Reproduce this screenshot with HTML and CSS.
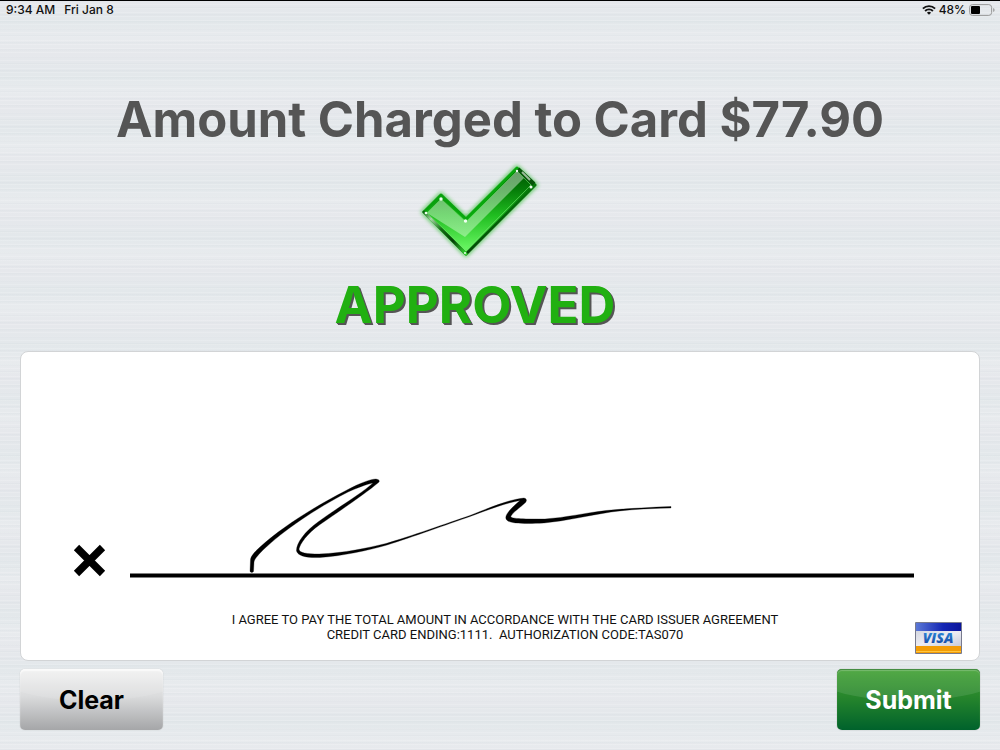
FILE: index.html
```html
<!DOCTYPE html>
<html lang="en">
<head>
<meta charset="utf-8">
<meta name="viewport" content="width=device-width, initial-scale=1">
<title>Card payment signature</title>
<link rel="stylesheet" href="styles.css">
</head>
<body>
<header class="status">
  <div class="status-group"><span>9:34 AM</span><span>Fri Jan 8</span></div>
  <div class="status-right">
    <svg class="wifi" viewBox="0 0 14 10" aria-hidden="true"><g fill="none" stroke="#111" stroke-width="1.9"><path d="M.9 3.700a8.600 8.600 0 0 1 12.200 0"/><path d="M3.100 6a5.500 5.500 0 0 1 7.800 0"/></g><path d="M7 9.800 4.900 7.800a3 3 0 0 1 4.200 0z" fill="#111"/></svg>
    <span>48%</span>
    <svg class="battery" viewBox="0 0 26 12" aria-hidden="true"><rect x=".6" y=".6" width="22" height="10.800" rx="2.800" fill="none" stroke="#999"/><rect x="2" y="2" width="9" height="8" rx="1" fill="#000"/><path d="M24.200 4v4q1.400-.6 1.400-2t-1.400-2z" fill="#999"/></svg>
  </div>
</header>
<main class="screen">
  <h1 class="amount">Amount Charged to Card $77.90</h1>
  <section class="result">
    <svg class="check" viewBox="415 160 128 102" aria-hidden="true">
      <defs>
        <linearGradient id="edge" x1="0" y1="0" x2="1" y2="1"><stop offset="0" stop-color="#079b0b"/><stop offset=".5" stop-color="#08a90d"/><stop offset=".72" stop-color="#033b06"/><stop offset="1" stop-color="#064d08"/></linearGradient>
        <linearGradient id="face" x1="0" y1="0" x2="0" y2="1"><stop offset="0" stop-color="#004f02"/><stop offset=".25" stop-color="#057c08"/><stop offset=".55" stop-color="#20bd20"/><stop offset="1" stop-color="#72ff6b"/></linearGradient>
        <linearGradient id="gloss" x1="0" y1="0" x2="0" y2="1"><stop offset="0" stop-color="#fff" stop-opacity=".42"/><stop offset="1" stop-color="#e5ffe3" stop-opacity=".42"/></linearGradient>
        <linearGradient id="rim" gradientUnits="userSpaceOnUse" x1="423" y1="212" x2="465" y2="254"><stop offset="0" stop-color="#06660a"/><stop offset=".18" stop-color="#a9d4a7"/><stop offset=".42" stop-color="#146d15"/><stop offset=".7" stop-color="#053f07"/><stop offset="1" stop-color="#35da32"/></linearGradient>
        <filter id="glow" x="-20%" y="-20%" width="140%" height="140%"><feGaussianBlur stdDeviation="2"/></filter>
      </defs>
      <path d="M423 212 441 194 466 218 517 167 536 185 466 255z" fill="#12b519" stroke="#12b519" stroke-width="3" filter="url(#glow)" opacity=".75"/>
      <path d="M424 212 441 195 466 219 517 168 535 185 466 254z" fill="url(#face)" stroke="url(#edge)" stroke-width="3" stroke-linejoin="round"/>
      <path d="M424 212 466 254" stroke="url(#rim)" stroke-width="3" stroke-linecap="round"/>
      <path d="m518 169 16 15" stroke="#07530a" stroke-width="4"/>
      <path d="m522 172 8 8" stroke="#9cbc9b" stroke-width="2"/>
      <path d="m427 213 14-14 25 23 51-51 7 7-59 59z" fill="url(#gloss)"/>
      <path d="m427 213 14-14 25 23 51-51 14 14-65 65z" fill="none" stroke="#70df6b" stroke-opacity=".6"/>
      <g fill="#effff0"><circle cx="426" cy="213" r="1.300"/><circle cx="441" cy="199" r="1.700"/><circle cx="465.500" cy="221" r="1.700"/><circle cx="517" cy="171" r="1.200"/><circle cx="531" cy="187" r="1.500"/><circle cx="465" cy="253" r="1"/></g>
    </svg>
    <p class="approved">APPROVED</p>
  </section>
  <section class="card" aria-label="Signature">
    <svg class="signature" viewBox="21 352 958 258" role="img" aria-label="Customer signature">
      <path d="m76.500 547.500 26 26m0-26-26 26" fill="none" stroke="#000" stroke-width="7.500"/>
      <path d="M130 575.500H914" stroke="#000" stroke-width="4"/>
      <path stroke="#000" stroke-width=".3" d="M250 571.500L250.500 559.500Q251 555 260 547C282 527 314 507 347 490C360 483 371 479 376 479Q381 480 378.500 482.500C366 493 344 508 320 524.500C307 533.500 300 544 299 549C299 553 307 554 319 554C345 553 367 548 386 543.500C410 536.500 448 523 470 515.500C495 505.500 510 499.500 524 498Q528 499 525.500 502.500C520 508 514 511 511 516C509 519 525 519 545 519C567 517.500 584 513 606 510.500C626 508.500 651 507.300 671 506.500V508C650 508.500 628 509.500 611 512C588 515.500 566 521 544 523C526 524 512 523.500 508 521C502 517.500 509 510 520 500.500C506 503 490 509 470 516.500C448 524 411 537.500 387 545C368 550.500 342 556 320 557.500C306 558 298 556 296.500 551C296 544 304 532 318 522C337 508 361 494 373 483C367 484 357 488 348 492C315 509 284 530 263 550Q254 559 254 562L253.500 571.500Q252 573.500 250 571.500z"/>
    </svg>
    <div class="card-foot">
      <p class="legal">I AGREE TO PAY THE TOTAL AMOUNT IN ACCORDANCE WITH THE CARD ISSUER AGREEMENT<br>CREDIT CARD ENDING:1111.&nbsp; AUTHORIZATION CODE:TAS070</p>
      <svg class="visa" viewBox="0 0 47 32" role="img" aria-label="Visa">
        <defs>
          <linearGradient id="vb" x1="0" x2="1" y1="0" y2="0"><stop offset="0" stop-color="#5b78d6"/><stop offset=".6" stop-color="#1426b4"/><stop offset="1" stop-color="#0b159c"/></linearGradient>
          <linearGradient id="vm" x1="0" x2="1" y1="0" y2="1"><stop offset="0" stop-color="#d5d8e2"/><stop offset=".5" stop-color="#ececf2"/><stop offset="1" stop-color="#c8cbd8"/></linearGradient>
          <linearGradient id="vt" x1="0" x2="0" y1="0" y2="1"><stop offset="0" stop-color="#2f9be8"/><stop offset="1" stop-color="#153a9b"/></linearGradient>
        </defs>
        <rect width="47" height="32" rx="1" fill="#777a8e"/>
        <rect x="1" y="1" width="45" height="8" fill="url(#vb)"/>
        <rect x="1" y="9" width="45" height="15" fill="url(#vm)"/>
        <rect x="1" y="24" width="45" height="7" fill="#f39c05"/>
        <path d="M1 29.500h45" stroke="#ffc53c"/>
        <text x="23" y="21" text-anchor="middle" class="visa-name" fill="url(#vt)">VISA</text>
      </svg>
    </div>
  </section>
  <div class="actions">
    <button class="btn btn-clear" type="button"><span>Clear</span></button>
    <button class="btn btn-submit" type="submit"><span>Submit</span></button>
  </div>
</main>
</body>
</html>
```
FILE: styles.css
```css
* { box-sizing: border-box; }
body {
  margin: 0;
  min-height: 100vh;
  border-top: 1px solid #000;
  font-family: Inter, "Liberation Sans", sans-serif;
  color: #111;
  background:
    repeating-linear-gradient(rgba(255,255,255,.16) 0 1px, transparent 1px 4px),
    repeating-linear-gradient(rgba(190,200,207,.1) 0 1px, transparent 2px 7px),
    repeating-linear-gradient(#e6e8ec 0, #e3e8eb 22px, #e8ebee 38px, #e6e8ec 54px);
}
.status {
  display: flex;
  justify-content: space-between;
  align-items: center;
  height: 17px;
  padding: 0 5px 0 6px;
  font-size: 12px;
  font-weight: 500;
}
.status-group { display: flex; gap: 9px; }
.status-right { display: flex; align-items: center; gap: 3px; }
.wifi { width: 14px; height: 10px; }
.battery { width: 26px; height: 12px; }
.screen { padding: 72px 20px 20px; }
.amount {
  margin: 0;
  font-size: 49px;
  line-height: 60px;
  font-weight: 700;
  text-align: center;
  color: #555;
}
.result {
  display: flex;
  flex-direction: column;
  align-items: center;
  padding: 10px 42px 0 0;
}
.check { width: 128px; height: 102px; }
.approved {
  margin: 13px 8px 17px 0;
  font-size: 51px;
  line-height: 59px;
  font-weight: 700;
  color: #21b011;
  text-shadow: 1px 1px #555, 2px 2px #555;
}
.card {
  border: 1px solid #d2d4d6;
  border-radius: 8px;
  background: #fff;
}
.signature { display: block; width: 100%; }
.card-foot {
  display: flex;
  align-items: flex-start;
  padding: 2px 17px 6px 74px;
}
.legal {
  flex: 1;
  margin: 0;
  font: 13px/15px Roboto, "Liberation Sans", sans-serif;
  text-align: center;
}
.visa { width: 47px; height: 32px; margin-top: 10px; }
.visa-name { font: italic 800 14px "Open Sans", sans-serif; }
.actions {
  display: flex;
  justify-content: space-between;
  padding-top: 8px;
}
.btn {
  position: relative;
  width: 143px;
  height: 61px;
  padding: 0;
  overflow: hidden;
  border: 0;
  border-radius: 5px;
  font: 700 25px/32px Inter, sans-serif;
}
.btn::before {
  content: "";
  position: absolute;
  left: -20%;
  right: -20%;
  top: -32px;
  height: 64px;
  border-radius: 50%;
  background: rgba(255,255,255,.1);
}
.btn span { position: relative; }
.btn-clear {
  color: #000;
  background: linear-gradient(#f2f2f2, #dadbdc 45%, #a5a6a8);
  box-shadow: inset 0 2px 1px #fafafa, 0 0 1px #aaa;
}
.btn-submit {
  color: #fff;
  background: linear-gradient(#3fa030, #27862c 45%, #00622c);
  box-shadow: inset 0 1px 1px #2a7c28, inset 0 2px 1px #70b966, 0 0 1px #777;
}
```
